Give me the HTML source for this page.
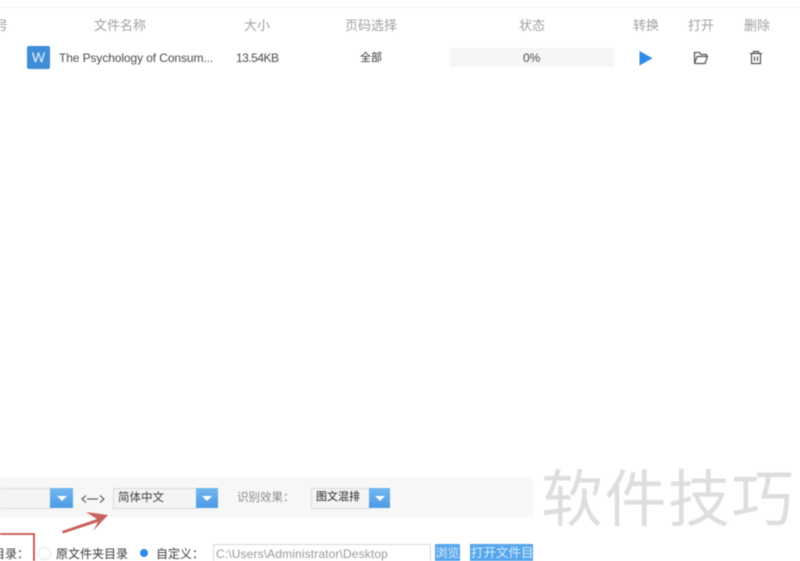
<!DOCTYPE html>
<html lang="zh">
<head>
<meta charset="utf-8">
<style>
html,body{margin:0;padding:0;background:#fff}
#p{position:relative;width:800px;height:561px;overflow:hidden;background:#fff;font-family:"Liberation Sans","Noto Sans CJK SC",sans-serif;filter:blur(.5px)}
.a{position:absolute;white-space:nowrap;line-height:16px}
.h{font-size:13px;color:#a0a0a0;top:18px}
.t{font-size:12px;color:#4a4a4a;top:50px}
.b{font-size:12px;color:#3c3c3c}
.sel{position:absolute;height:19px;top:488px;background:#f4f4f4;border:1px solid #dadada;box-sizing:content-box}
.arr{position:absolute;top:488px;height:20px;background:linear-gradient(#74b7ee,#4b9ae4)}
.arr:after{content:"";position:absolute;left:50%;top:8px;margin-left:-5px;border-left:5px solid transparent;border-right:5px solid transparent;border-top:5px solid #fff}
.btn{position:absolute;top:544px;height:17px;background:#55a6ec;color:#dcecfb;font-size:12px;line-height:18px;overflow:hidden;white-space:nowrap}
</style>
</head>
<body>
<div id="p">
<div class="a" style="left:0;top:7px;width:800px;height:1px;background:#efefef"></div>

<div class="a h" style="left:-18px">序号</div>
<div class="a h" style="left:94px">文件名称</div>
<div class="a h" style="left:244px">大小</div>
<div class="a h" style="left:345px">页码选择</div>
<div class="a h" style="left:519px">状态</div>
<div class="a h" style="left:633px">转换</div>
<div class="a h" style="left:688px">打开</div>
<div class="a h" style="left:744px">删除</div>

<div class="a" style="left:27px;top:46px;width:23px;height:23px;background:#3f8dd6;border-radius:2px;color:#e8f2fb;font-size:14px;line-height:23px;text-align:center">W</div>
<div class="a t" style="left:59px;letter-spacing:-.1px">The Psychology of Consum...</div>
<div class="a t" style="left:236px;letter-spacing:-.5px">13.54KB</div>
<div class="a t" style="left:360px;font-size:11px;color:#333">全部</div>
<div class="a" style="left:450px;top:48px;width:164px;height:19px;background:#f6f6f6"></div>
<div class="a t" style="left:523px">0%</div>

<svg class="a" style="left:630px;top:44px" width="140" height="28" viewBox="0 0 140 28">
<path d="M9.500 7V21.500L22.500 14.200Z" fill="#2b8be6"/>
<path d="M64.500 19.500V8.500H69.500L71 10.500H76.500V12.500M64.500 19.500H75L77.500 12.500H67L64.500 19.500" fill="none" stroke="#555" stroke-width="1.200"/>
<path d="M120 9.500H132M123.500 9.500V7.500H128.500V9.500M121.500 9.500V19.500H130.500V9.500M124.500 12.500V17M127.500 12.500V17" fill="none" stroke="#555" stroke-width="1.200"/>
</svg>

<div class="a" style="left:0;top:477px;width:533px;height:40px;background:#f7f7f7"></div>

<div class="sel" style="left:-2px;width:52px"></div>
<div class="arr" style="left:50px;width:23px"></div>
<svg class="a" style="left:80px;top:490px" width="26" height="18" viewBox="0 0 26 18"><path d="M6 5.500L2 9L6 12.500M7 9H18M20 5.500L24 9L20 12.500" fill="none" stroke="#444" stroke-width="1"/></svg>
<div class="sel" style="left:113px;width:82px"></div>
<div class="a b" style="left:118px;top:490px;font-size:11.500px">简体中文</div>
<div class="arr" style="left:196px;width:22px"></div>
<div class="a h" style="left:237px;top:490px;font-size:11.500px;color:#8a8a8a">识别效果：</div>
<div class="sel" style="left:311px;width:57px"></div>
<div class="a b" style="left:316px;top:489px;font-size:11px;color:#222">图文混排</div>
<div class="arr" style="left:369px;width:21px"></div>

<svg class="a" style="left:0;top:505px" width="120" height="56" viewBox="0 0 120 56">
<path d="M108 10L86 7L97 14L62 26L63 28.500L98 17L93 26Z" fill="#c9605a"/>
<path d="M0 29H34V56" fill="none" stroke="#c2514e" stroke-width="1.800"/>
</svg>

<div class="a b" style="left:-7px;top:546px">目录：</div>
<div class="a" style="left:38px;top:547px;width:11px;height:11px;border:1px solid #e6e6e6;border-radius:50%"></div>
<div class="a b" style="left:56px;top:546px">原文件夹目录</div>
<div class="a" style="left:140px;top:549px;width:8px;height:8px;background:#2b8be6;border-radius:50%"></div>
<div class="a b" style="left:156px;top:546px">自定义：</div>
<div class="a" style="left:213px;top:544px;width:218px;height:17px;border:1px solid #d8d8d8;border-bottom:0;box-sizing:border-box"></div>
<div class="a" style="left:216px;top:546px;font-size:12px;color:#999;letter-spacing:.13px">C:\Users\Administrator\Desktop</div>
<div class="btn" style="left:435px;width:25px;text-align:center">浏览</div>
<div class="btn" style="left:470px;width:63px;padding-left:1px;box-sizing:border-box;font-size:12.500px">打开文件目录</div>

<div class="a" style="left:541px;top:458px;font-size:62px;line-height:72px;letter-spacing:1.500px;color:#dedede;font-family:'Noto Sans CJK SC',sans-serif;font-weight:400">软件技巧</div>
</div>
</body>
</html>
